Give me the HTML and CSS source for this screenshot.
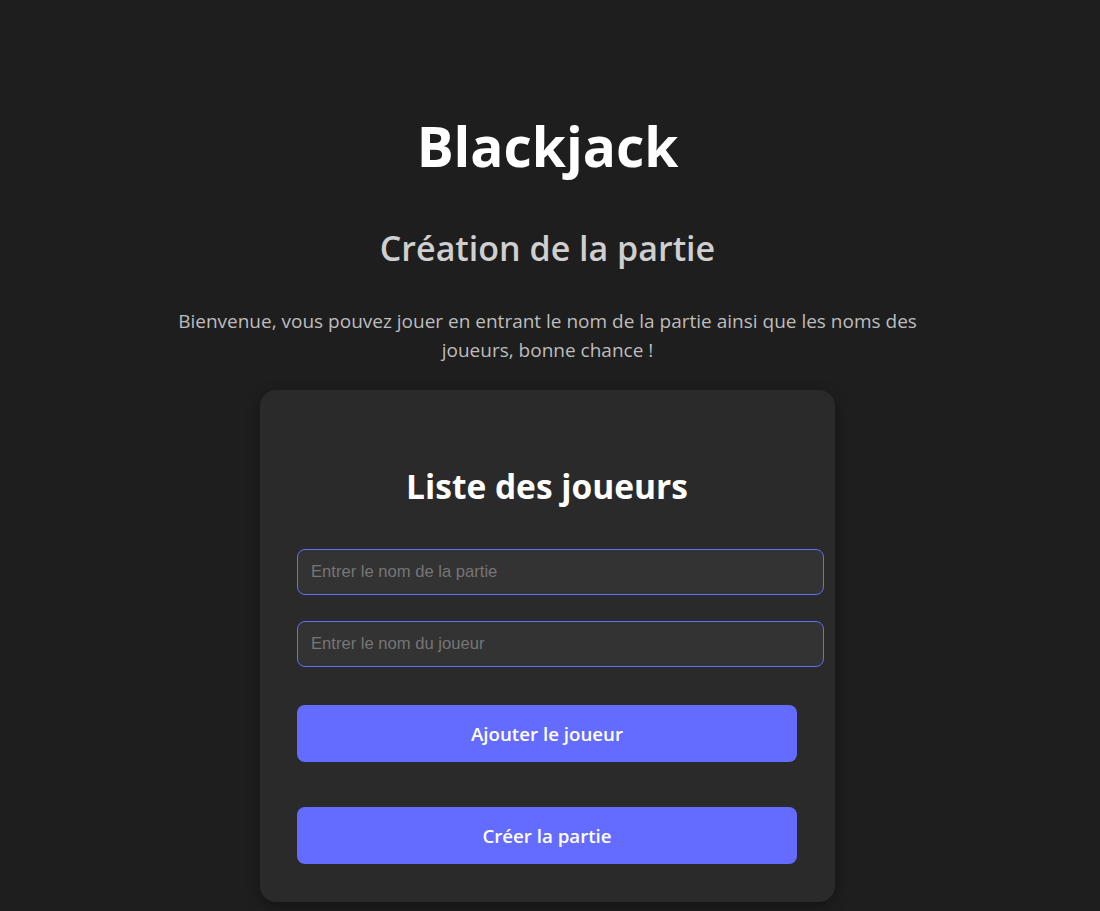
FILE: index.html
```html
<!DOCTYPE html>
<html lang="fr">
<head>
<meta charset="utf-8">
<title>Blackjack</title>
<link rel="stylesheet" href="styles.css">
</head>
<body>
<main class="page">
  <h1 class="title">Blackjack</h1>
  <h2 class="subtitle">Création de la partie</h2>
  <p class="intro">Bienvenue, vous pouvez jouer en entrant le nom de la partie ainsi que les noms des<br>joueurs, bonne chance !</p>
  <section class="card">
    <h2 class="card-title">Liste des joueurs</h2>
    <input class="field" type="text" placeholder="Entrer le nom de la partie">
    <input class="field" type="text" placeholder="Entrer le nom du joueur">
    <button class="btn btn-add" type="button">Ajouter le joueur</button>
    <button class="btn btn-create" type="button">Créer la partie</button>
  </section>
</main>
</body>
</html>
```

FILE: styles.css
```css
html, body {
  margin: 0;
  padding: 0;
  background: #1e1e1e;
  height: 100%;
}
body {
  font-family: "Open Sans", "Noto Sans", sans-serif;
  color: #ffffff;
}
.page {
  display: flex;
  flex-direction: column;
  align-items: center;
  padding-top: 104px;
  padding-right: 5px;
}
.title {
  margin: 0;
  font-size: 55px;
  line-height: 84px;
  font-weight: 700;
  color: #ffffff;
}
.subtitle {
  margin: 38px 0 0;
  font-size: 34px;
  line-height: 44px;
  font-weight: 600;
  color: #cfcfcf;
}
.intro {
  margin: 37px 0 0;
  font-size: 19px;
  line-height: 29px;
  text-align: center;
  color: #bdbdbd;
}
.card {
  box-sizing: border-box;
  margin-top: 25px;
  width: 575px;
  padding: 74px 38px 38px 37px;
  background: #2a2a2a;
  border-radius: 16px;
  box-shadow: 0 4px 14px rgba(0, 0, 0, 0.35);
  display: flex;
  flex-direction: column;
}
.card-title {
  margin: 0 0 41px;
  text-align: center;
  font-size: 33.5px;
  line-height: 44px;
  font-weight: 700;
  color: #ffffff;
}
.field {
  box-sizing: border-box;
  width: 527px;
  padding: 0 13px;
  height: 46px;
  border: 1px solid #646cff;
  border-radius: 8px;
  background: #333333;
  color: #e0e0e0;
  font-family: "Liberation Sans", Arial, sans-serif;
  font-size: 16.6px;
  outline: none;
}
.field::placeholder { color: #767676; }
.field + .field { margin-top: 26px; }
.btn {
  box-sizing: border-box;
  width: 500px;
  height: 57px;
  padding: 0;
  border: none;
  border-radius: 8px;
  background: #646cff;
  color: #ffffff;
  font-family: "Open Sans", "Noto Sans", sans-serif;
  font-size: 18.7px;
  font-weight: 600;
  cursor: pointer;
}
.btn-add { margin-top: 38px; }
.btn-create { margin-top: 45px; }
```
